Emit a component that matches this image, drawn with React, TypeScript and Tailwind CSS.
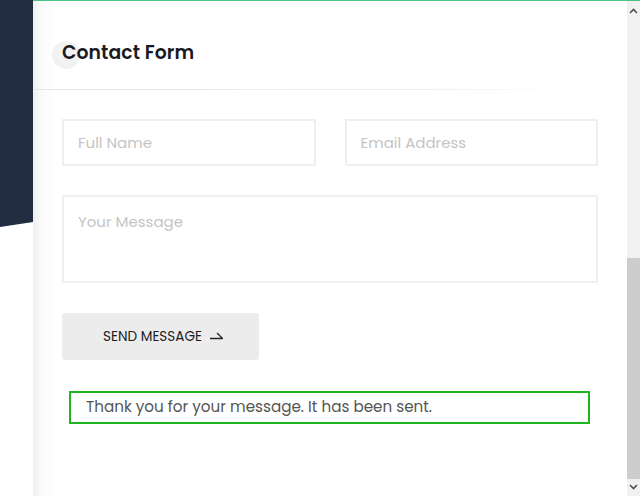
import React from "react";

const font = { fontFamily: "Poppins, 'Open Sans', 'Noto Sans', sans-serif" };

function Harpoon() {
  return (
    <svg width="13" height="8" viewBox="0 0 13 8" fill="none" className="ml-[8px] mb-[3px]">
      <path d="M0 6.5H12.5L7.5 1.5" stroke="#222" strokeWidth="1.3" strokeLinecap="square" />
    </svg>
  );
}

export default function App() {
  return (
    <div className="w-[640px] h-[496px] flex bg-white overflow-hidden" style={font}>
      <div className="w-[33px] shrink-0">
        <div className="h-[227px] bg-[#222d42] [clip-path:polygon(0_0,100%_0,100%_222px,0_227px)]" />
      </div>
      <div className="flex-1 flex border-t border-[#4fbf8a]">
        <div className="flex-1 bg-[linear-gradient(to_right,#eeeeee,#fafafa_8px,#ffffff_22px)] flex flex-col">
          <div className="h-[88px] pl-[29px] pt-[38px] relative">
            <div className="absolute left-[19px] top-[40px] w-[28px] h-[28px] rounded-full bg-[#f2f2f2]" />
            <h2 className="relative text-[18.8px] font-semibold text-[#1b1b1f] tracking-[0.1px]">Contact Form</h2>
          </div>
          <div className="h-px w-[540px] bg-[linear-gradient(to_right,#e6e6e6,#eeeeee_70%,transparent)]" />
          <div className="pl-[29px] pr-[29px] pt-[29px] flex flex-col">
            <div className="grid grid-cols-2 gap-[29px]">
              <div className="h-[47px] border-2 border-[#efefef] flex items-center pl-[14px] pt-[2px] text-[15px] text-[#c4c4c4]">Full Name</div>
              <div className="h-[47px] border-2 border-[#efefef] flex items-center pl-[14px] pt-[2px] text-[15px] text-[#c4c4c4]">Email Address</div>
            </div>
            <div className="mt-[29px] h-[88px] border-2 border-[#efefef] pl-[14px] pt-[14px] text-[15px] text-[#c4c4c4]">Your Message</div>
            <div className="mt-[30px] w-[197px] h-[47px] rounded-[3px] bg-[#ececec] flex items-center justify-center pl-[5px] pt-[2px] text-[13.6px] font-normal text-[#1e1e1e] uppercase">
              <span>Send Message</span>
              <Harpoon />
            </div>
            <div className="mt-[31px] ml-[7px] mr-[8px] h-[33px] border-2 border-[#1fb51f] flex items-center pl-[15px] text-[15.2px] text-[#555]">
              Thank you for your message. It has been sent.
            </div>
          </div>
        </div>
        <div className="w-[13px] bg-[#f1f1f1] flex flex-col items-center">
          <svg width="9" height="6" viewBox="0 0 9 6" className="mt-[7px]"><path d="M1 5L4.5 1.5L8 5" stroke="#505050" strokeWidth="1.6" fill="none" /></svg>
          <div className="mt-[244px] w-full h-[221px] bg-[#cdcdcd]" />
          <svg width="9" height="6" viewBox="0 0 9 6" className="mt-[5px]"><path d="M1 1L4.5 4.5L8 1" stroke="#505050" strokeWidth="1.6" fill="none" /></svg>
        </div>
      </div>
    </div>
  );
}
